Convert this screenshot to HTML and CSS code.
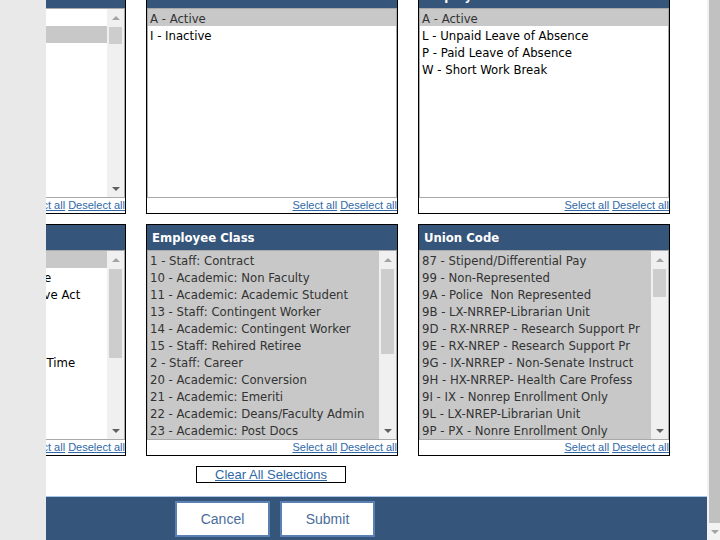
FILE: index.html
```html
<!DOCTYPE html>
<html lang="en">
<head>
<meta charset="utf-8">
<title>Filters</title>
<link rel="stylesheet" href="styles.css">
</head>
<body>
<div class="viewport">
  <aside class="side"></aside>
  <main class="main">
    <div class="page">
      <div class="rows">
        <div class="row">
          <section class="panel">
            <div class="panel-head">Employee Type</div>
            <div class="list">
              <div class="opts">
                <div class="opt">C - Contract</div>
                <div class="opt sel">H - Hourly</div>
                <div class="opt">S - Salaried</div>
                <div class="opt">T - Temporary</div>
                <div class="opt">P - Per Diem</div>
                <div class="opt">R - Regular</div>
                <div class="opt">N - Non-Pay</div>
                <div class="opt">E - Emeriti</div>
                <div class="opt">W - Without Salary</div>
                <div class="opt">V - Visiting</div>
                <div class="opt">X - Other</div>
              </div>
              <div class="sb">
                <div class="sb-up"></div>
                <div class="sb-track"><div class="sb-thumb" style="height:17px"></div></div>
                <div class="sb-down"></div>
              </div>
            </div>
            <div class="foot"><a href="#">Select all</a> <a href="#">Deselect all</a></div>
          </section>
          <section class="panel">
            <div class="panel-head">HR Status</div>
            <div class="list">
              <div class="opts">
                <div class="opt sel">A - Active</div>
                <div class="opt">I - Inactive</div>
              </div>
            </div>
            <div class="foot"><a href="#">Select all</a> <a href="#">Deselect all</a></div>
          </section>
          <section class="panel">
            <div class="panel-head">Employee Status</div>
            <div class="list">
              <div class="opts">
                <div class="opt sel">A - Active</div>
                <div class="opt">L - Unpaid Leave of Absence</div>
                <div class="opt">P - Paid Leave of Absence</div>
                <div class="opt">W - Short Work Break</div>
              </div>
            </div>
            <div class="foot"><a href="#">Select all</a> <a href="#">Deselect all</a></div>
          </section>
        </div>
        <div class="row">
          <section class="panel">
            <div class="panel-head">FLSA Status</div>
            <div class="list">
              <div class="opts">
                <div class="opt sel">E - Exempt</div>
                <div class="opt">N - Nonexempt Full Employee</div>
                <div class="opt">W - Salaried Exempt Executive Act</div>
                <div class="opt">H - Hourly</div>
                <div class="opt">M - Monthly</div>
                <div class="opt">O - Other</div>
                <div class="opt">V - Variable Work Hours Part Time</div>
                <div class="opt">W - Weekly</div>
                <div class="opt">X - Unknown</div>
                <div class="opt">Y - Yearly</div>
                <div class="opt">Z - None</div>
              </div>
              <div class="sb">
                <div class="sb-up"></div>
                <div class="sb-track"><div class="sb-thumb" style="height:89px"></div></div>
                <div class="sb-down"></div>
              </div>
            </div>
            <div class="foot"><a href="#">Select all</a> <a href="#">Deselect all</a></div>
          </section>
          <section class="panel">
            <div class="panel-head">Employee Class</div>
            <div class="list">
              <div class="opts all-sel">
                <div class="opt">1 - Staff: Contract</div>
                <div class="opt">10 - Academic: Non Faculty</div>
                <div class="opt">11 - Academic: Academic Student</div>
                <div class="opt">13 - Staff: Contingent Worker</div>
                <div class="opt">14 - Academic: Contingent Worker</div>
                <div class="opt">15 - Staff: Rehired Retiree</div>
                <div class="opt">2 - Staff: Career</div>
                <div class="opt">20 - Academic: Conversion</div>
                <div class="opt">21 - Academic: Emeriti</div>
                <div class="opt">22 - Academic: Deans/Faculty Admin</div>
                <div class="opt">23 - Academic: Post Docs</div>
              </div>
              <div class="sb">
                <div class="sb-up"></div>
                <div class="sb-track"><div class="sb-thumb" style="height:85px"></div></div>
                <div class="sb-down"></div>
              </div>
            </div>
            <div class="foot"><a href="#">Select all</a> <a href="#">Deselect all</a></div>
          </section>
          <section class="panel">
            <div class="panel-head">Union Code</div>
            <div class="list">
              <div class="opts all-sel">
                <div class="opt">87 - Stipend/Differential Pay</div>
                <div class="opt">99 - Non-Represented</div>
                <div class="opt">9A - Police&nbsp; Non Represented</div>
                <div class="opt">9B - LX-NRREP-Librarian Unit</div>
                <div class="opt">9D - RX-NRREP - Research Support Pr</div>
                <div class="opt">9E - RX-NREP - Research Support Pr</div>
                <div class="opt">9G - IX-NRREP - Non-Senate Instruct</div>
                <div class="opt">9H - HX-NRREP- Health Care Profess</div>
                <div class="opt">9I - IX - Nonrep Enrollment Only</div>
                <div class="opt">9L - LX-NREP-Librarian Unit</div>
                <div class="opt">9P - PX - Nonre Enrollment Only</div>
              </div>
              <div class="sb">
                <div class="sb-up"></div>
                <div class="sb-track"><div class="sb-thumb" style="height:28px"></div></div>
                <div class="sb-down"></div>
              </div>
            </div>
            <div class="foot"><a href="#">Select all</a> <a href="#">Deselect all</a></div>
          </section>
        </div>
      </div>
      <div class="clear-wrap"><a class="clear" href="#">Clear All Selections</a></div>
      <div class="actions">
        <button class="btn" type="button">Cancel</button>
        <button class="btn" type="button">Submit</button>
      </div>
    </div>
  </main>
  <div class="vscroll">
    <div class="vthumb"></div>
    <div class="vbtn"></div>
  </div>
</div>
</body>
</html>
```
FILE: styles.css
```css
html, body {
  margin: 0;
  padding: 0;
  height: 100%;
  overflow: hidden;
  background: #fff;
}

.viewport {
  display: flex;
  height: 540px;
}

.side {
  flex: none;
  width: 46px;
  background: #e9e9e9;
}

.main {
  flex: none;
  width: 661px;
  overflow: hidden;
  background: #fff;
}

/* page is scrolled: 211px to the right, 18px down */
.page {
  width: 872px;
  margin: -18px 0 0 -211px;
}

.rows {
  padding: 0 37px 0 39px;
}

.row {
  display: flex;
  gap: 20px;
}

.row + .row {
  margin-top: 10px;
}

.panel {
  flex: none;
  width: 252px;
  box-sizing: border-box;
  border: 1px solid #000;
  display: flex;
  flex-direction: column;
}

.panel-head {
  height: 25px;
  padding-left: 5px;
  background: #35557b;
  color: #fff;
  font: bold 13px/25px "DejaVu Sans Condensed", "DejaVu Sans", sans-serif;
  white-space: nowrap;
  overflow: hidden;
}

.list {
  height: 190px;
  box-sizing: border-box;
  border: 1px solid #a9a9a9;
  display: flex;
  background: #fff;
}

.opts {
  flex: 1;
  min-width: 0;
  overflow: hidden;
}

.opts.all-sel {
  background: #c8c8c8;
}

.opt {
  height: 17px;
  box-sizing: border-box;
  padding: 1px 0 0 2px;
  white-space: nowrap;
  font: 13px/17px "DejaVu Sans Condensed", "DejaVu Sans", sans-serif;
  color: #000;
}

.opt.sel {
  background: #c8c8c8;
  color: #333;
}

.all-sel .opt {
  color: #333;
}

.sb {
  flex: none;
  width: 17px;
  background: #f0f0f0;
  display: flex;
  flex-direction: column;
}

.sb-up,
.sb-down {
  flex: none;
  height: 17px;
  display: flex;
  align-items: center;
  justify-content: center;
}

.sb-up::before {
  content: "";
  border-left: 4px solid transparent;
  border-right: 4px solid transparent;
  border-bottom: 4px solid #a3a3a3;
}

.sb-down::before {
  content: "";
  border-left: 4px solid transparent;
  border-right: 4px solid transparent;
  border-top: 4px solid #606060;
}

.sb-track {
  flex: 1;
  padding: 1px 2px 0;
}

.sb-thumb {
  background: #cdcdcd;
}

.foot {
  height: 15px;
  text-align: right;
  white-space: nowrap;
  overflow: hidden;
  font: 11px/15px "Liberation Sans", Arial, sans-serif;
  background: #fff;
}

.foot a {
  color: #2f69a8;
  text-decoration: underline;
}

.clear-wrap {
  margin-top: 10px;
  display: flex;
  justify-content: center;
}

.clear {
  display: block;
  width: 150px;
  height: 17px;
  box-sizing: border-box;
  border: 1px solid #000;
  text-align: center;
  font: 13px/15px "Liberation Sans", Arial, sans-serif;
  color: #2f69a8;
  text-decoration: underline;
}

.actions {
  margin-top: 13px;
  height: 60px;
  box-sizing: border-box;
  border-top: 1px solid #a9c6e6;
  background: #35557b;
  display: flex;
  justify-content: center;
  align-items: flex-start;
  gap: 10px;
  padding: 4px 0 0 8px;
}

.btn {
  width: 95px;
  height: 36px;
  box-sizing: border-box;
  border: 2px solid #5b80b3;
  background: #fff;
  color: #4a6d9c;
  font: 14px "Liberation Sans", Arial, sans-serif;
  padding: 0;
}

.vscroll {
  flex: none;
  width: 13px;
  box-sizing: border-box;
  padding-left: 2px;
  background: #f3f3f3;
  display: flex;
  flex-direction: column;
}

.vthumb {
  flex: 1;
  background: #c1c1c1;
}

.vbtn {
  flex: none;
  height: 17px;
  display: flex;
  align-items: center;
  justify-content: center;
}

.vbtn::before {
  content: "";
  border-left: 4px solid transparent;
  border-right: 4px solid transparent;
  border-top: 4px solid #a3a3a3;
}
```
